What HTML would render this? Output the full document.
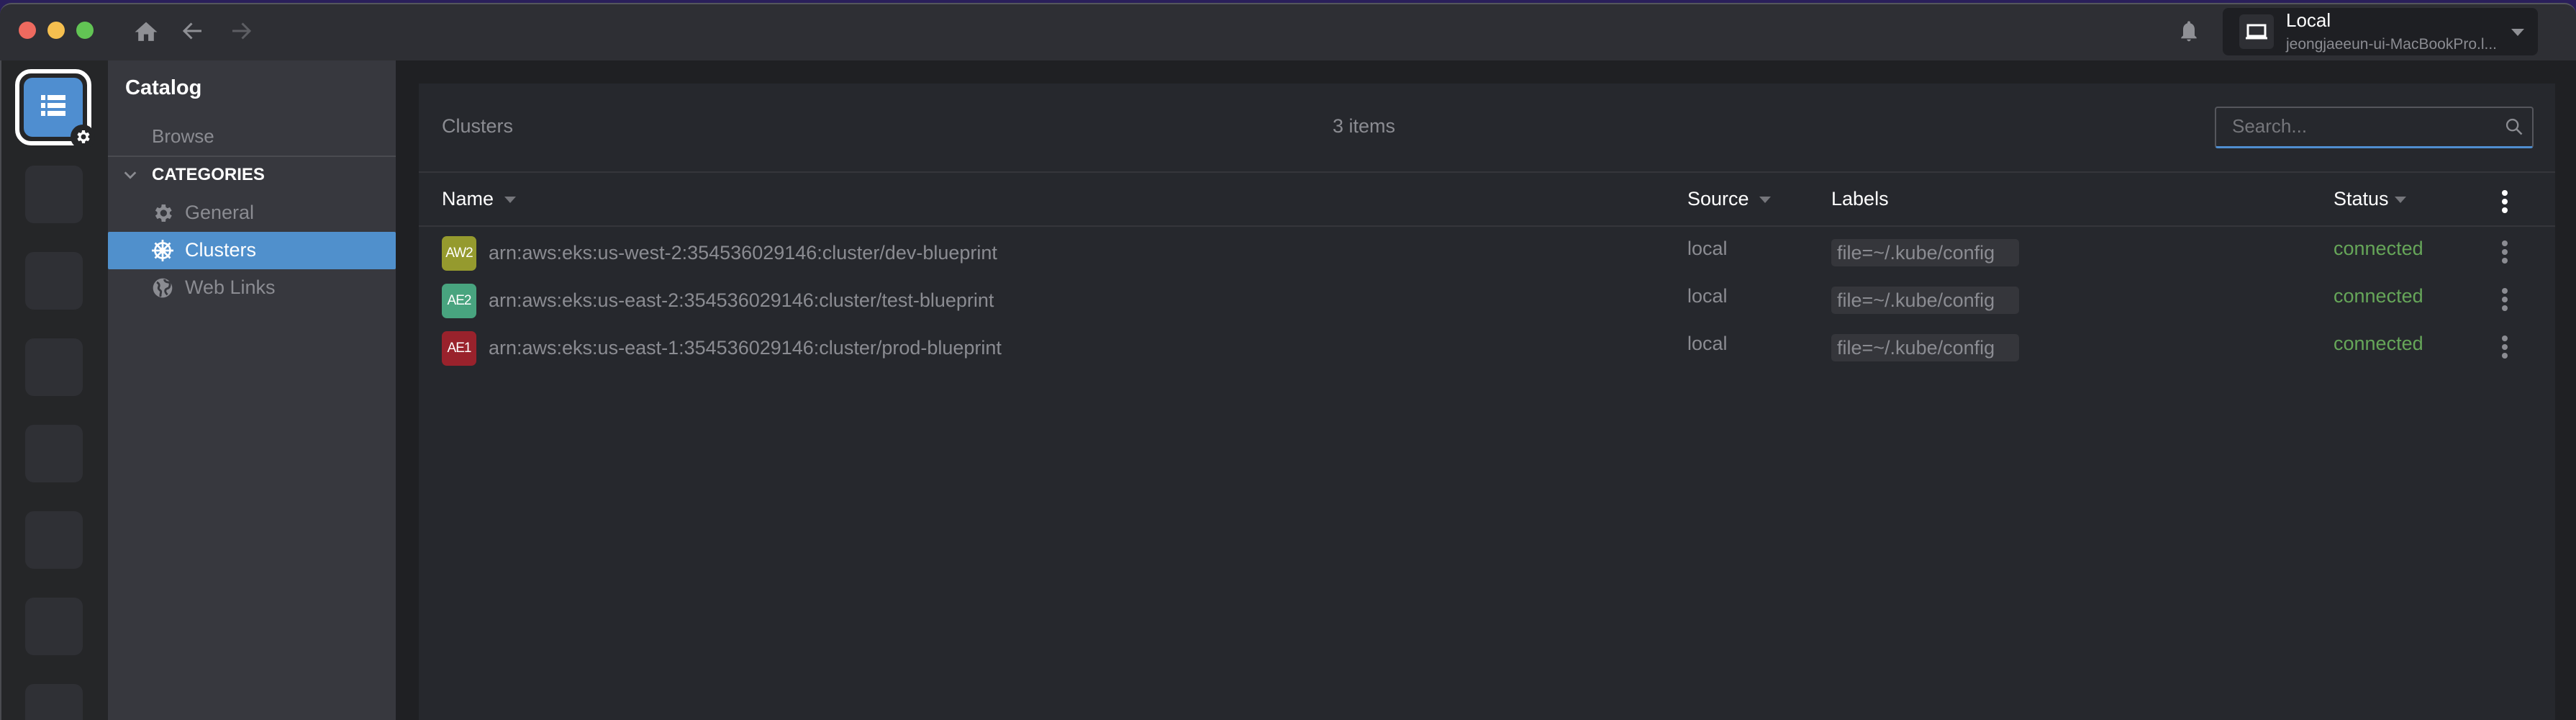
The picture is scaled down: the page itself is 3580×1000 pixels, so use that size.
<!DOCTYPE html>
<html><head><meta charset="utf-8"><style>
*{margin:0;padding:0;box-sizing:border-box}
body{width:3580px;height:1000px;background:#2a1f5a;font-family:"Liberation Sans",sans-serif;position:relative;overflow:hidden}
.win{position:absolute;left:0;top:0;width:3580px;height:1000px;background:#1f2023;overflow:hidden}
.abs{position:absolute}
.title{left:0;top:4px;width:3580px;height:80px;background:#2e2f34;border-top-left-radius:16px;border-top-right-radius:16px;border-top:2px solid #55565c}
.dot{width:24px;height:24px;border-radius:50%;top:30px}
.iconbar{left:0;top:84px;width:150px;height:916px;background:#252628;border-left:2px solid #4a4b50}
.ph{left:35px;width:80px;height:80px;border-radius:12px;background:#2f3035}
.side{left:150px;top:84px;width:400px;height:916px;background:#37383e;color:#8b8c92}
.content{left:582px;top:116px;width:2969px;height:900px;background:#26282d}
.t{position:absolute;white-space:nowrap}
.badge{position:absolute;width:48px;height:48px;border-radius:7px;color:#fff;font-size:19px;text-align:center;line-height:48px;letter-spacing:-1px}
.row{color:#8b8c92;font-size:27px}
.chip{position:absolute;width:261px;height:38px;background:#35363b;border-radius:5px;color:#8b8c92;font-size:27px;line-height:38px;padding-left:8px}
.conn{color:#66a659;font-size:27px}
.keb{position:absolute;width:8px}
.keb i{display:block;width:8px;height:8px;border-radius:50%;background:#8b8c92;margin-bottom:4px}
</style></head><body>
<div class="win" style="background:transparent">
 <div class="abs" style="left:0;top:84px;width:3580px;height:916px;background:#1f2023"></div>
 <div class="abs title"></div>
 <div class="abs dot" style="left:26px;background:#ee6a5f"></div>
 <div class="abs dot" style="left:66px;background:#f5bf4f"></div>
 <div class="abs dot" style="left:106px;background:#62c454"></div>
 <svg class="abs" style="left:184px;top:26px" width="38" height="34" viewBox="0 0 24 22"><path d="M10 20v-6h4v6h5v-8h3L12 3 2 12h3v8z" fill="#8f9095"/></svg>
 <svg class="abs" style="left:250px;top:25px" width="36" height="36" viewBox="0 0 24 24"><path d="M20 12H5M11 5l-7 7 7 7" stroke="#8f9095" stroke-width="2" fill="none"/></svg>
 <svg class="abs" style="left:317px;top:25px" width="36" height="36" viewBox="0 0 24 24"><path d="M4 12h15M13 5l7 7-7 7" stroke="#5d5e63" stroke-width="2" fill="none"/></svg>
 <svg class="abs" style="left:3026px;top:26px" width="32" height="36" viewBox="0 0 24 26"><path d="M12 2c-1 0-1.5.7-1.5 1.5v.7C7.5 5 6 7.5 6 10.5V17l-2 2v1h16v-1l-2-2v-6.5c0-3-1.5-5.5-4.5-6.3v-.7C13.5 2.7 13 2 12 2zM10 21a2 2 0 004 0z" fill="#8f9095"/></svg>
 <div class="abs" style="left:3089px;top:11px;width:438px;height:66px;background:#1e1f23;border-radius:8px"></div>
 <div class="abs" style="left:3112px;top:20px;width:48px;height:48px;background:#2e2f34;border-radius:6px"></div>
 <svg class="abs" style="left:3118px;top:26px" width="36" height="36" viewBox="0 0 24 24"><path d="M4 6h16v10H4zM2 18h20" stroke="#fff" stroke-width="2" fill="none"/></svg>
 <div class="t" style="left:3177px;top:13px;color:#fff;font-size:26px">Local</div>
 <div class="t" style="left:3177px;top:50px;color:#8b8c92;font-size:21px">jeongjaeeun-ui-MacBookPro.l...</div>
 <div class="abs" style="left:3490px;top:40px;border-left:9px solid transparent;border-right:9px solid transparent;border-top:10px solid #8f9095"></div>

 <div class="abs iconbar"></div>
 <div class="abs" style="left:21px;top:96px;width:106px;height:106px;border:6px solid #fff;border-radius:22px;background:#252628"></div>
 <div class="abs" style="left:33px;top:108px;width:82px;height:82px;background:#4f8ed0;border-radius:12px"></div>
 <svg class="abs" style="left:57px;top:132px" width="34" height="30" viewBox="0 0 34 30"><g fill="#fff"><rect x="0" y="0" width="6" height="7"/><rect x="9" y="0" width="25" height="7"/><rect x="0" y="11" width="6" height="7"/><rect x="9" y="11" width="25" height="7"/><rect x="0" y="22" width="6" height="7"/><rect x="9" y="22" width="25" height="7"/></g></svg>
 <div class="abs" style="left:98px;top:173px;width:34px;height:34px;border-radius:50%;background:#252628"></div>
 <svg class="abs" style="left:103px;top:178px" width="24" height="24" viewBox="0 0 24 24"><path fill="#fff" d="M19.4 13a7.5 7.5 0 000-2l2.1-1.6-2-3.5-2.5 1a7 7 0 00-1.7-1L15 3h-4l-.4 2.9a7 7 0 00-1.7 1l-2.5-1-2 3.5L6.5 11a7.5 7.5 0 000 2l-2.1 1.6 2 3.5 2.5-1a7 7 0 001.7 1L11 21h4l.4-2.9a7 7 0 001.7-1l2.5 1 2-3.5zM13 15.5a3.5 3.5 0 110-7 3.5 3.5 0 010 7z"/></svg>
 <div class="abs ph" style="top:230px"></div>
 <div class="abs ph" style="top:350px"></div>
 <div class="abs ph" style="top:470px"></div>
 <div class="abs ph" style="top:590px"></div>
 <div class="abs ph" style="top:710px"></div>
 <div class="abs ph" style="top:830px"></div>
 <div class="abs ph" style="top:950px"></div>

 <div class="abs side">
  <div class="t" style="left:24px;top:22px;color:#fff;font-size:29px;font-weight:bold">Catalog</div>
  <div class="t" style="left:61px;top:90px;font-size:26px">Browse</div>
  <div class="abs" style="left:0;top:132px;width:400px;height:2px;background:#4a4b50"></div>
  <svg class="abs" style="left:20px;top:148px" width="22" height="22" viewBox="0 0 24 24"><path d="M4 8l8 8 8-8" stroke="#8b8c92" stroke-width="3" fill="none"/></svg>
  <div class="t" style="left:61px;top:145px;color:#fff;font-size:24px;font-weight:bold">CATEGORIES</div>
  <svg class="abs" style="left:60px;top:196px" width="32" height="32" viewBox="0 0 24 24"><path fill="#8b8c92" d="M19.4 13a7.5 7.5 0 000-2l2.1-1.6-2-3.5-2.5 1a7 7 0 00-1.7-1L15 3h-4l-.4 2.9a7 7 0 00-1.7 1l-2.5-1-2 3.5L6.5 11a7.5 7.5 0 000 2l-2.1 1.6 2 3.5 2.5-1a7 7 0 001.7 1L11 21h4l.4-2.9a7 7 0 001.7-1l2.5 1 2-3.5zM13 15.5a3.5 3.5 0 110-7 3.5 3.5 0 010 7z"/></svg>
  <div class="t" style="left:107px;top:196px;font-size:27px">General</div>
  <div class="abs" style="left:0;top:238px;width:400px;height:52px;background:#5090cc;border-radius:2px"></div>
  <svg class="abs" style="left:58px;top:246px" width="36" height="36" viewBox="0 0 24 24"><g stroke="#fff" stroke-width="1.8" fill="none"><circle cx="12" cy="12" r="7"/><circle cx="12" cy="12" r="2"/><path d="M12 2v20M2 12h20M5 5l14 14M19 5L5 19"/></g></svg>
  <div class="t" style="left:107px;top:248px;color:#fff;font-size:27px">Clusters</div>
  <svg class="abs" style="left:60px;top:300px" width="32" height="32" viewBox="0 0 24 24"><circle cx="12" cy="12" r="10" fill="#8b8c92"/><path d="M6 6c2 1 3 3 2 5s1 3 2 4-1 4 0 6M14 3c0 2 2 3 4 3s2 3 1 5-3 1-4 3 1 4 2 5" stroke="#37383e" stroke-width="2.2" fill="none"/></svg>
  <div class="t" style="left:107px;top:300px;font-size:27px">Web Links</div>
 </div>

 <div class="abs content">
  <div class="t" style="left:32px;top:44px;color:#8b8c92;font-size:27px">Clusters</div>
  <div class="t" style="left:1270px;top:44px;color:#8b8c92;font-size:27px">3 items</div>
  <div class="abs" style="left:2496px;top:32px;width:443px;height:58px;border:2px solid #55565c;border-bottom:3px solid #4f8ed0;border-radius:4px"></div>
  <div class="t" style="left:2520px;top:44px;color:#75767b;font-size:26px">Search...</div>
  <svg class="abs" style="left:2898px;top:46px" width="28" height="28" viewBox="0 0 24 24"><circle cx="10" cy="10" r="6.5" stroke="#8b8c92" stroke-width="2" fill="none"/><path d="M15 15l6 6" stroke="#8b8c92" stroke-width="2.2"/></svg>
  <div class="abs" style="left:0;top:122px;width:2969px;height:2px;background:#35363b"></div>
  <div class="t" style="left:32px;top:145px;color:#fff;font-size:27px">Name</div>
  <div class="abs" style="left:119px;top:157px;border-left:8px solid transparent;border-right:8px solid transparent;border-top:9px solid #75767b"></div>
  <div class="t" style="left:1763px;top:145px;color:#fff;font-size:27px">Source</div>
  <div class="abs" style="left:1863px;top:157px;border-left:8px solid transparent;border-right:8px solid transparent;border-top:9px solid #75767b"></div>
  <div class="t" style="left:1963px;top:145px;color:#fff;font-size:27px">Labels</div>
  <div class="t" style="left:2661px;top:145px;color:#fff;font-size:27px">Status</div>
  <div class="abs" style="left:2746px;top:157px;border-left:8px solid transparent;border-right:8px solid transparent;border-top:9px solid #75767b"></div>
  <div class="keb" style="left:2895px;top:148px"><i style="background:#fff"></i><i style="background:#fff"></i><i style="background:#fff"></i></div>
  <div class="abs" style="left:0;top:197px;width:2969px;height:2px;background:#35363b"></div>

  <div class="badge" style="left:32px;top:212px;background:#959a2e">AW2</div>
  <div class="t row" style="left:97px;top:220px">arn:aws:eks:us-west-2:354536029146:cluster/dev-blueprint</div>
  <div class="t row" style="left:1763px;top:214px">local</div>
  <div class="chip" style="left:1963px;top:216px">file=~/.kube/config</div>
  <div class="t conn" style="left:2661px;top:214px">connected</div>
  <div class="keb" style="left:2895px;top:218px"><i></i><i></i><i></i></div>

  <div class="badge" style="left:32px;top:278px;background:#48a47f">AE2</div>
  <div class="t row" style="left:97px;top:286px">arn:aws:eks:us-east-2:354536029146:cluster/test-blueprint</div>
  <div class="t row" style="left:1763px;top:280px">local</div>
  <div class="chip" style="left:1963px;top:282px">file=~/.kube/config</div>
  <div class="t conn" style="left:2661px;top:280px">connected</div>
  <div class="keb" style="left:2895px;top:284px"><i></i><i></i><i></i></div>

  <div class="badge" style="left:32px;top:344px;background:#99222c">AE1</div>
  <div class="t row" style="left:97px;top:352px">arn:aws:eks:us-east-1:354536029146:cluster/prod-blueprint</div>
  <div class="t row" style="left:1763px;top:346px">local</div>
  <div class="chip" style="left:1963px;top:348px">file=~/.kube/config</div>
  <div class="t conn" style="left:2661px;top:346px">connected</div>
  <div class="keb" style="left:2895px;top:350px"><i></i><i></i><i></i></div>
 </div>
</div>
</body></html>
